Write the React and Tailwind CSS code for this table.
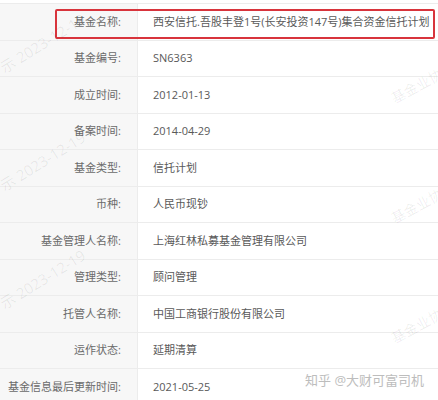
import React from 'react';

const rows = [
  { label: '基金名称:', value: '西安信托.吾股丰登1号(长安投资147号)集合资金信托计划' },
  { label: '基金编号:', value: 'SN6363' },
  { label: '成立时间:', value: '2012-01-13' },
  { label: '备案时间:', value: '2014-04-29' },
  { label: '基金类型:', value: '信托计划' },
  { label: '币种:', value: '人民币现钞' },
  { label: '基金管理人名称:', value: '上海红林私募基金管理有限公司' },
  { label: '管理类型:', value: '顾问管理' },
  { label: '托管人名称:', value: '中国工商银行股份有限公司' },
  { label: '运作状态:', value: '延期清算' },
  { label: '基金信息最后更新时间:', value: '2021-05-25' },
];

const App = () => {
  return (
    <div
      className="relative w-[438px] h-[400px] overflow-hidden bg-white"
      style={{ fontFamily: '"Open Sans", "Noto Sans CJK SC", sans-serif' }}
    >
      {/* Table */}
      <div className="mt-[3px] border-t border-[#ececec]">
        {rows.map((row) => (
          <div key={row.label} className="flex h-[36.5px] border-b border-[#ececec]">
            <div className="w-[138px] shrink-0 bg-[#f7f7f7] border-r border-[#ececec] flex items-center justify-end pr-[16px] text-[11px] text-[#6a6a6a] whitespace-nowrap">
              {row.label}
            </div>
            <div className="flex-1 flex items-center pl-[15px] text-[11px] text-[#595959] whitespace-nowrap">
              {row.value}
            </div>
          </div>
        ))}
      </div>

      {/* Highlight box */}
      <div className="absolute left-[55px] top-[9px] w-[380px] h-[30px] border-2 border-[#d8343c] rounded-[2px]" />

      {/* Watermarks */}
      <div className="absolute left-[-6px] top-[32px] -rotate-[32deg] text-[15px] text-black/[0.07] whitespace-nowrap">示 2023-12-19</div>
      <div className="absolute left-[-6px] top-[150px] -rotate-[32deg] text-[15px] text-black/[0.07] whitespace-nowrap">示 2023-12-19</div>
      <div className="absolute left-[-6px] top-[268px] -rotate-[32deg] text-[15px] text-black/[0.07] whitespace-nowrap">示 2023-12-19</div>
      <div className="absolute left-[388px] top-[72px] -rotate-[28deg] text-[14px] text-black/[0.07] whitespace-nowrap">基金业协会</div>
      <div className="absolute left-[388px] top-[192px] -rotate-[28deg] text-[14px] text-black/[0.07] whitespace-nowrap">基金业协会</div>
      <div className="absolute left-[388px] top-[312px] -rotate-[28deg] text-[14px] text-black/[0.07] whitespace-nowrap">基金业协会</div>

      {/* Source tag */}
      <div className="absolute left-[305px] top-[371px] text-[13px] text-[#bdbdbd] whitespace-nowrap">知乎 @大财可富司机</div>
    </div>
  );
};

export default App;
